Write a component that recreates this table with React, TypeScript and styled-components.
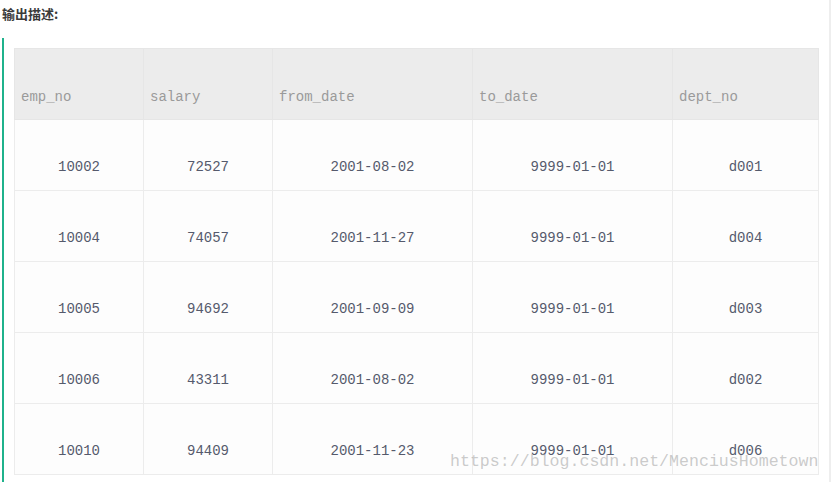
import styled, { createGlobalStyle } from "styled-components";

const GlobalStyle = createGlobalStyle`
  html, body {
    margin: 0;
    padding: 0;
    background: #ffffff;
  }
`;

const rows = [
  { empNo: "10002", salary: "72527", fromDate: "2001-08-02", toDate: "9999-01-01", deptNo: "d001" },
  { empNo: "10004", salary: "74057", fromDate: "2001-11-27", toDate: "9999-01-01", deptNo: "d004" },
  { empNo: "10005", salary: "94692", fromDate: "2001-09-09", toDate: "9999-01-01", deptNo: "d003" },
  { empNo: "10006", salary: "43311", fromDate: "2001-08-02", toDate: "9999-01-01", deptNo: "d002" },
  { empNo: "10010", salary: "94409", fromDate: "2001-11-23", toDate: "9999-01-01", deptNo: "d006" },
];

const columns = [
  { key: "empNo", title: "emp_no", width: 129 },
  { key: "salary", title: "salary", width: 129 },
  { key: "fromDate", title: "from_date", width: 200 },
  { key: "toDate", title: "to_date", width: 200 },
  { key: "deptNo", title: "dept_no", width: 146 },
] as const;

function App() {
  return (
    <>
      <GlobalStyle />
      <Page>
        <Title>输出描述:</Title>
        <Quote>
          <Table>
            <colgroup>
              {columns.map((c) => (
                <col key={c.key} style={{ width: c.width }} />
              ))}
            </colgroup>
            <thead>
              <tr>
                {columns.map((c) => (
                  <HeadCell key={c.key}>{c.title}</HeadCell>
                ))}
              </tr>
            </thead>
            <tbody>
              {rows.map((r) => (
                <tr key={r.empNo}>
                  {columns.map((c) => (
                    <BodyCell key={c.key}>{r[c.key]}</BodyCell>
                  ))}
                </tr>
              ))}
            </tbody>
          </Table>
        </Quote>
        <Watermark>https://blog.csdn.net/MenciusHometown</Watermark>
        <RightEdge />
      </Page>
    </>
  );
}
export default App;

const Page = styled.div`
  position: relative;
  width: 831px;
  height: 482px;
  overflow: hidden;
  background: #ffffff;
`;
const Title = styled.div`
  padding: 6px 0 0 2px;
  height: 18px;
  font-family: "Noto Sans CJK SC", "Noto Sans", sans-serif;
  font-size: 13px;
  font-weight: 700;
  line-height: 16px;
  color: #3a3a3a;
`;
const Quote = styled.div`
  margin: 14px 0 0 2px;
  border-left: 2px solid #1fb28c;
  padding: 10px 0 0 10px;
  height: 500px;
`;
const Table = styled.table`
  border-collapse: collapse;
  table-layout: fixed;
  width: 804px;
  font-family: "Liberation Mono", "Courier New", monospace;
  font-size: 14px;
`;
const HeadCell = styled.th`
  height: 71px;
  box-sizing: border-box;
  padding: 0 6px 12px;
  vertical-align: bottom;
  text-align: left;
  font-weight: 400;
  line-height: 20px;
  color: #9a9a9a;
  background: #ececec;
  border: 1px solid #e6e6e6;
`;
const BodyCell = styled.td`
  height: 71px;
  box-sizing: border-box;
  padding: 0 6px 13px;
  vertical-align: bottom;
  text-align: center;
  line-height: 20px;
  color: #555a6c;
  background: #fdfdfd;
  border: 1px solid #ececec;
`;
const Watermark = styled.div`
  position: absolute;
  left: 450px;
  top: 451px;
  font-family: "Liberation Mono", "Courier New", monospace;
  font-size: 16.6px;
  line-height: 22px;
  color: rgba(160, 160, 160, 0.55);
  white-space: nowrap;
`;
const RightEdge = styled.div`
  position: absolute;
  right: 0;
  top: 0;
  bottom: 0;
  width: 2px;
  background: #eeeeee;
`;
